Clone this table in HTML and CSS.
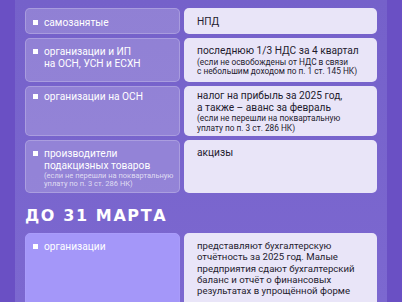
FILE: index.html
```html
<!DOCTYPE html>
<html lang="ru">
<head>
<meta charset="utf-8">
<link rel="stylesheet" href="styles.css">
</head>
<body>
<div class="page">
  <div class="panel">
    <div class="grid top">
      <div class="card who single"><span class="bullet"></span><div class="who-text"><div class="main">самозанятые</div></div></div>
      <div class="card what single"><div class="main">НПД</div></div>

      <div class="card who"><span class="bullet"></span><div class="who-text"><div class="main">организации и ИП<br>на ОСН, УСН и ЕСХН</div></div></div>
      <div class="card what"><div class="main">последнюю 1/3 НДС за 4 квартал</div><div class="note">(если не освобождены от НДС в связи<br>с небольшим доходом по п. 1 ст. 145 НК)</div></div>

      <div class="card who tight"><span class="bullet"></span><div class="who-text"><div class="main">организации на ОСН</div></div></div>
      <div class="card what tight"><div class="main">налог на прибыль за 2025 год,<br>а также – аванс за февраль</div><div class="note">(если не перешли на поквартальную<br>уплату по п. 3 ст. 286 НК)</div></div>

      <div class="card who"><span class="bullet"></span><div class="who-text"><div class="main">производители<br>подакцизных товаров</div><div class="note small">(если не перешли на поквартальную<br>уплату по п. 3 ст. 286 НК)</div></div></div>
      <div class="card what"><div class="main">акцизы</div></div>
    </div>

    <h2 class="heading">ДО 31 МАРТА</h2>

    <div class="grid bottom">
      <div class="card who accent"><span class="bullet"></span><div class="who-text"><div class="main">организации</div></div></div>
      <div class="card what"><div class="main long">представляют бухгалтерскую<br>отчётность за 2025 год. Малые<br>предприятия сдают бухгалтерский<br>баланс и отчёт о финансовых<br>результатах в упрощённой форме</div></div>
    </div>
  </div>
</div>
</body>
</html>
```

FILE: styles.css
```css
* { box-sizing: border-box; }
html, body { margin: 0; padding: 0; }
body {
  width: 402px;
  height: 302px;
  overflow: hidden;
  background: #6a50c4;
  font-family: Roboto, "Noto Sans", sans-serif;
}
.page {
  padding: 0 15px;
  height: 302px;
}
.panel {
  height: 100%;
  background: linear-gradient(180deg, #7561ca 0%, #7c68d0 100%);
  padding: 8px 10px 0;
}
.grid {
  display: grid;
  grid-template-columns: 155px 193px;
  column-gap: 4px;
  row-gap: 4px;
}
.top { grid-template-rows: 26px 44px 50px 53px; }
.bottom { grid-template-rows: 80px; }
.card {
  border-radius: 5px;
  padding: 7px 6px 5px 13px;
  white-space: nowrap;
  overflow: hidden;
}
.card.single { padding-top: 8px; }
.card.tight { padding-top: 4px; }
.who {
  display: flex;
  align-items: flex-start;
  gap: 6px;
  padding-left: 7px;
  background: rgba(255, 255, 255, 0.2);
  border: 1px solid rgba(255, 255, 255, 0.22);
  color: #ffffff;
}
.who.accent {
  background: #a497f9;
  border-color: #a99cfa;
}
.what {
  background: #e9e5f8;
  color: #1e1b2e;
}
.bullet {
  flex: none;
  width: 5px;
  height: 5px;
  margin-top: 3px;
  background: #ffffff;
}
.main {
  font-size: 10.2px;
  line-height: 11.5px;
}
.main.long {
  font-size: 9.6px;
  line-height: 11.3px;
}
.note {
  font-size: 8.3px;
  line-height: 9.5px;
  margin-top: 1px;
}
.note.small {
  font-size: 7.5px;
  line-height: 8px;
}
.who .note { color: rgba(255, 255, 255, 0.72); }
.heading {
  margin: 0;
  height: 40px;
  padding-top: 15px;
  font-family: "DejaVu Sans", sans-serif;
  font-weight: bold;
  font-size: 16px;
  line-height: 16px;
  letter-spacing: 1.6px;
  color: #ffffff;
}
```
